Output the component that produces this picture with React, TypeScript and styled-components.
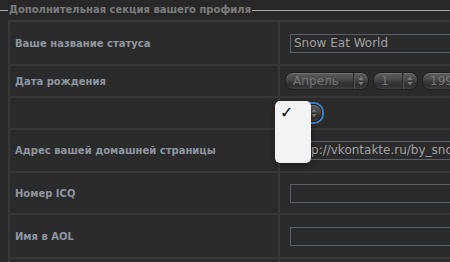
import React from "react";
import styled, { createGlobalStyle } from "styled-components";

const Global = createGlobalStyle`
  html, body { margin: 0; padding: 0; background: #282828; overflow: hidden; }
  body { width: 450px; height: 262px; font-family: "DejaVu Sans", "Liberation Sans", sans-serif; }
`;

const Page = styled.div`
  position: relative;
  width: 450px;
  height: 262px;
  overflow: hidden;
`;

const Legend = styled.div`
  display: flex;
  align-items: center;
  height: 20px;
  gap: 1px;
`;

const LegendLine = styled.div<{ $short?: boolean }>`
  height: 1px;
  background: #a9a9a9;
  ${(p) => (p.$short ? "width: 8px;" : "flex: 1;")}
`;

const LegendText = styled.span`
  font-size: 10px;
  font-weight: bold;
  color: #7d7d7d;
  white-space: nowrap;
  padding-bottom: 1px;
`;

const Table = styled.div`
  margin-left: 8px;
  width: 560px;
  display: grid;
  grid-template-columns: 268px 1fr;
  grid-template-rows: 42px 30px 30px 41px 40px 42px 40px;
  gap: 2px;
  padding: 2px 0 0 2px;
  background: #383838;
`;

const Label = styled.div`
  background: #2b2b2b;
  display: flex;
  align-items: center;
  padding-left: 5px;
  font-size: 10px;
  font-weight: bold;
  color: #9096a0;
  white-space: nowrap;
`;

const Value = styled.div<{ $pad?: number }>`
  background: #2b2b2b;
  display: flex;
  align-items: center;
  padding-left: ${(p) => p.$pad ?? 10}px;
  gap: 4px;
  overflow: hidden;
`;

const TextInput = styled.div`
  box-sizing: border-box;
  width: 240px;
  flex: none;
  height: 19px;
  border: 1px solid #5b5f66;
  padding-left: 3px;
  font-size: 12px;
  line-height: 17px;
  color: #a2a2a2;
  white-space: nowrap;
  overflow: hidden;
`;

const SelectBox = styled.div<{ $w: number; $focus?: boolean }>`
  box-sizing: border-box;
  position: relative;
  width: ${(p) => p.$w}px;
  flex: none;
  height: 18px;
  border-radius: 8px;
  border: 1px solid #1f1f1f;
  background: linear-gradient(#5c5c5c 0%, #4a4a4a 40%, #3b3b3b 55%, #2f2f2f 75%, #3f3f3f 100%);
  box-shadow: inset 0 1px 0 rgba(255, 255, 255, 0.15)${(p) => (p.$focus ? ", 0 0 0 2px #3f82c8" : "")};
  display: flex;
  align-items: center;
  font-size: 12px;
  color: #787878;
  white-space: nowrap;
`;

const SelectText = styled.span`
  flex: 1;
  padding-left: 7px;
  overflow: hidden;
`;

const Arrows = styled.div`
  width: 14px;
  height: 100%;
  border-left: 1px solid #2a2a2a;
  box-shadow: inset 1px 0 0 #555;
  display: flex;
  align-items: center;
  justify-content: center;
`;

const Popup = styled.div`
  position: absolute;
  left: 275px;
  top: 101px;
  width: 36px;
  height: 62px;
  box-sizing: border-box;
  background: #f3f3f3;
  border-radius: 5px;
  box-shadow: 0 2px 6px rgba(0, 0, 0, 0.4);
  padding: 2px 0 0 5px;
  font-size: 16px;
  line-height: 20px;
  color: #000;
  font-family: "DejaVu Sans", sans-serif;
`;

const ArrowIcon = () => (
  <svg width="6" height="10" viewBox="0 0 6 10">
    <path d="M3 0.5 L5.5 4 L0.5 4 Z" fill="#7a7a7a" />
    <path d="M3 9.5 L5.5 6 L0.5 6 Z" fill="#7a7a7a" />
  </svg>
);

const Select = ({ w, text, focus }: { w: number; text: string; focus?: boolean }) => (
  <SelectBox $w={w} $focus={focus}>
    <SelectText>{text}</SelectText>
    <Arrows>
      <ArrowIcon />
    </Arrows>
  </SelectBox>
);

export default function App() {
  return (
    <Page>
      <Global />
      <Legend>
        <LegendLine $short />
        <LegendText>Дополнительная секция вашего профиля</LegendText>
        <LegendLine />
      </Legend>
      <Table>
        <Label>Ваше название статуса</Label>
        <Value>
          <TextInput>Snow Eat World</TextInput>
        </Value>
        <Label>Дата рождения</Label>
        <Value $pad={5}>
          <Select w={84} text="Апрель" />
          <Select w={45} text="1" />
          <Select w={80} text="1990" />
        </Value>
        <Label />
        <Value $pad={5}>
          <Select w={37} text="" focus />
        </Value>
        <Label>Адрес вашей домашней страницы</Label>
        <Value>
          <TextInput>http://vkontakte.ru/by_snoweatworld</TextInput>
        </Value>
        <Label>Номер ICQ</Label>
        <Value>
          <TextInput />
        </Value>
        <Label>Имя в AOL</Label>
        <Value>
          <TextInput />
        </Value>
        <Label />
        <Value />
      </Table>
      <Popup>✓</Popup>
    </Page>
  );
}
